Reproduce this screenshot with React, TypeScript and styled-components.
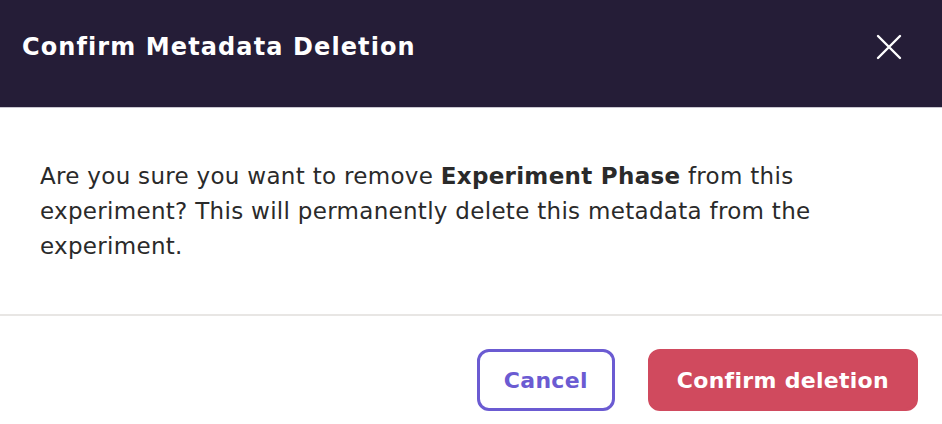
import styled, { createGlobalStyle } from 'styled-components';

const GlobalStyle = createGlobalStyle`
	html, body {
		margin: 0;
		padding: 0;
		background: #ffffff;
		font-family: "DejaVu Sans", Inter, sans-serif;
	}
`;

export default function App() {
	return (
		<>
			<GlobalStyle />
			<Modal>
				<Header>
					<Title>Confirm Metadata Deletion</Title>
					<CloseButton aria-label="Close">
						<svg width="26" height="26" viewBox="0 0 26 26" fill="none">
							<path d="M2 2 L24 24 M24 2 L2 24" stroke="#ffffff" strokeWidth="2.4" strokeLinecap="round" />
						</svg>
					</CloseButton>
				</Header>
				<Body>
					<p>
						Are you sure you want to remove <b>Experiment Phase</b> from this experiment? This will
						permanently delete this metadata from the experiment.
					</p>
				</Body>
				<Footer>
					<Button variant="outline">Cancel</Button>
					<Button variant="danger">Confirm deletion</Button>
				</Footer>
			</Modal>
		</>
	);
}

const Modal = styled.div`
	width: 942px;
	height: 424px;
	display: flex;
	flex-direction: column;
	background: #ffffff;
`;

const Header = styled.div`
	height: 108px;
	display: flex;
	flex-direction: row;
	justify-content: space-between;
	align-items: center;
	padding: 0 40px 0 22px;
	box-sizing: border-box;
	background-color: #251d37;
	border-bottom: 1px solid #c9c6d0;
`;

const Title = styled.h1`
	margin: 0 0 14px;
	font-size: 24px;
	font-weight: 700;
	letter-spacing: 1.1px;
	color: #ffffff;
`;

const CloseButton = styled.button`
	border: none;
	background: transparent;
	padding: 0;
	margin-bottom: 14px;
	display: flex;
	cursor: pointer;
`;

const Body = styled.div`
	height: 208px;
	padding: 0 40px;
	box-sizing: border-box;
	border-bottom: 2px solid #e8e6e4;
	display: flex;
	align-items: center;

	p {
		margin: 0;
		font-size: 23px;
		line-height: 35px;
		letter-spacing: 0.3px;
		color: #2a2a2a;
		max-width: 840px;
	}

	b {
		font-weight: 700;
	}
`;

const Footer = styled.div`
	flex: 1;
	display: flex;
	flex-direction: row;
	justify-content: flex-end;
	align-items: center;
	gap: 33px;
	padding: 20px 24px 0;
`;

const Button = styled.button<{ variant: 'outline' | 'danger' }>`
	height: 62px;
	box-sizing: border-box;
	border-radius: 12px;
	font-family: inherit;
	font-size: 22px;
	font-weight: 700;
	letter-spacing: 0.3px;
	cursor: pointer;
	padding: ${(p) => (p.variant === 'outline' ? '0 24px' : '0 26px')};
	border: 3px solid ${(p) => (p.variant === 'outline' ? '#6b5bd2' : '#d04a5e')};
	background-color: ${(p) => (p.variant === 'outline' ? '#ffffff' : '#d04a5e')};
	color: ${(p) => (p.variant === 'outline' ? '#6b5bd2' : '#ffffff')};
`;
